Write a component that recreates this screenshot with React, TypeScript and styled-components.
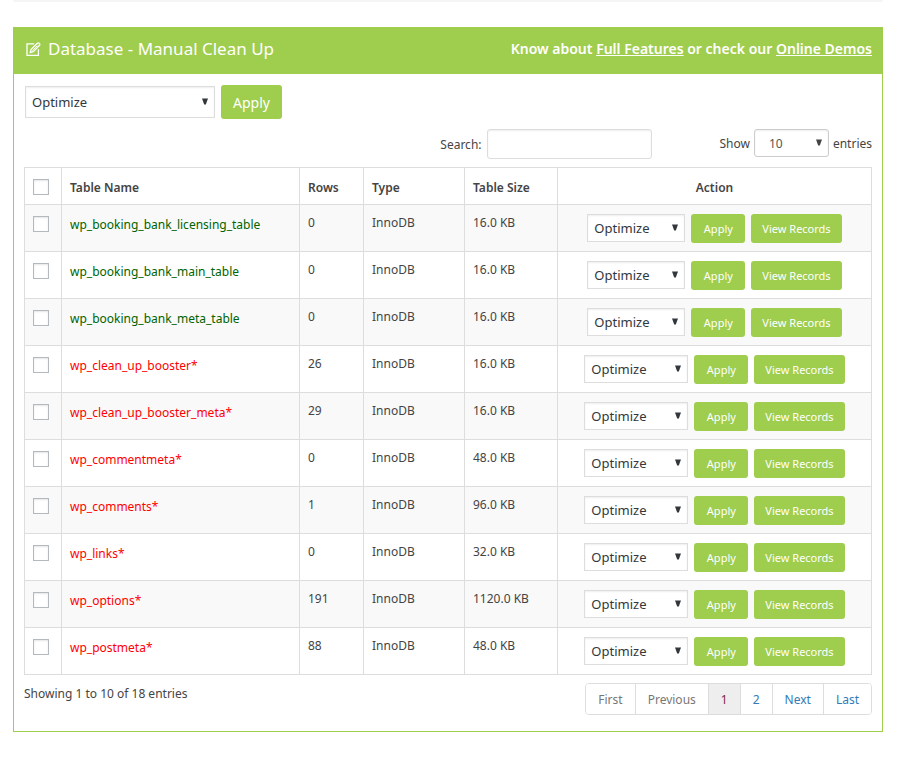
import React from 'react';
import styled, { createGlobalStyle } from 'styled-components';

const GREEN = '#9fcd4e';
const LINE = '#dddddd';

const GlobalStyle = createGlobalStyle`
  *, *::before, *::after { box-sizing: border-box; }
  body {
    margin: 0;
    background: #ffffff;
    color: #444444;
    font-family: 'Noto Sans', 'Open Sans', sans-serif;
    font-size: 12px;
    line-height: 18px;
  }
  button, input, select { font-family: inherit; }
`;

const Page = styled.div`
  padding: 0 14px 24px 13px;
`;

const PreviousPanelEdge = styled.div`
  height: 2px;
  margin-bottom: 25px;
  background: #f5f5f5;
  border-radius: 0 0 4px 4px;
`;

const Panel = styled.section`
  border: 1px solid ${GREEN};
  background: #ffffff;
`;

const PanelHeader = styled.header`
  display: flex;
  align-items: center;
  justify-content: space-between;
  min-height: 46px;
  padding: 0 10px 4px 12px;
  background: ${GREEN};
  color: #ffffff;
`;

const Title = styled.h1`
  display: flex;
  align-items: center;
  gap: 7px;
  margin: 0;
  font-size: 17px;
  font-weight: 400;
  line-height: 24px;
`;

const Promo = styled.p`
  margin: 0;
  font-size: 14px;
  font-weight: 600;
  line-height: 20px;
`;

const PromoLink = styled.a`
  color: #ffffff;
  text-decoration: underline;
`;

const PanelBody = styled.div`
  padding: 11px 10px 16px;
`;

const BulkBar = styled.div`
  display: flex;
  align-items: center;
  gap: 6px;
  padding-left: 1px;
  margin-bottom: 10px;
`;

const SelectBox = styled.span<{ $width: number }>`
  display: inline-grid;
  align-items: center;
  width: ${(p) => p.$width}px;

  > * { grid-area: 1 / 1; }
`;

const SelectField = styled.select<{ $tall?: boolean; $entries?: boolean }>`
  appearance: none;
  width: 100%;
  height: ${(p) => (p.$tall ? 32 : 28)}px;
  margin: 0;
  padding: 0 20px 0 ${(p) => (p.$entries ? 14 : 6)}px;
  border: 1px solid ${(p) => (p.$entries ? '#cccccc' : LINE)};
  border-radius: ${(p) => (p.$entries ? 3 : 0)}px;
  background: #ffffff;
  box-shadow: inset 0 1px 2px rgba(0, 0, 0, 0.07);
  color: ${(p) => (p.$entries ? '#555555' : '#32373c')};
  font-size: ${(p) => (p.$entries ? 12 : 13)}px;
`;

const Arrow = styled.svg`
  justify-self: end;
  margin-right: 7px;
  margin-bottom: 1px;
  pointer-events: none;
`;

const Button = styled.button<{ $large?: boolean }>`
  min-width: 54px;
  height: ${(p) => (p.$large ? 34 : 29)}px;
  padding: 0 ${(p) => (p.$large ? 12 : 11)}px;
  border: 0;
  border-radius: 3px;
  background: ${GREEN};
  color: #ffffff;
  font-size: ${(p) => (p.$large ? 14 : 11)}px;
  white-space: nowrap;
  cursor: pointer;
`;

const Controls = styled.div`
  display: grid;
  grid-template-columns: 74% 1fr;
  align-items: start;
  margin-bottom: 8px;
`;

const SearchLabel = styled.label`
  justify-self: end;
  display: flex;
  align-items: center;
  gap: 5px;
`;

const SearchInput = styled.input`
  width: 165px;
  height: 30px;
  padding: 3px 8px;
  border: 1px solid ${LINE};
  border-radius: 3px;
  background: #ffffff;
  box-shadow: inset 0 1px 2px rgba(0, 0, 0, 0.07);
  font-size: 12px;
`;

const LengthLabel = styled.label`
  justify-self: end;
  display: flex;
  align-items: center;
  gap: 4px;
`;

const Caption = styled.span`
  padding-top: 2px;
`;

const Table = styled.table`
  width: 100%;
  table-layout: fixed;
  border-collapse: collapse;
`;

const HeadCell = styled.th<{ $width?: number; $center?: boolean }>`
  width: ${(p) => (p.$width ? `${p.$width}px` : 'auto')};
  height: 37px;
  padding: 4px 8px 0;
  border: 1px solid ${LINE};
  font-weight: 600;
  text-align: ${(p) => (p.$center ? 'center' : 'left')};
`;

const CheckHeadCell = styled(HeadCell)`
  padding-top: 2px;
`;

const Row = styled.tr`
  height: 47px;

  &:nth-child(odd) { background: #f9f9f9; }
`;

const Cell = styled.td`
  padding: 9px 8px 8px;
  border: 1px solid ${LINE};
  vertical-align: top;
`;

const NameCell = styled(Cell)<{ $core: boolean }>`
  padding-top: 11px;
  color: ${(p) => (p.$core ? '#ff0000' : '#006400')};
`;

const CheckCell = styled(Cell)`
  padding-top: 11px;
`;

const CheckBox = styled.input`
  appearance: none;
  display: block;
  width: 16px;
  height: 16px;
  margin: 0;
  border: 1px solid #b4b9be;
  background: #ffffff;
  box-shadow: inset 0 1px 2px rgba(0, 0, 0, 0.1);

  &:checked { background: ${GREEN}; }
`;

const Actions = styled.div`
  display: flex;
  justify-content: center;
  align-items: flex-start;
  gap: 6px;
`;

const Footer = styled.footer`
  display: flex;
  align-items: flex-start;
  justify-content: space-between;
  padding-top: 8px;
`;

const Pager = styled.nav`
  display: flex;
  border: 1px solid ${LINE};
  border-radius: 4px;
  overflow: hidden;
`;

const PageLink = styled.a<{ $state?: 'disabled' | 'current' }>`
  padding: 7px 12px 5px;
  background: ${(p) => (p.$state === 'current' ? '#eeeeee' : '#ffffff')};
  color: ${(p) =>
    p.$state === 'disabled' ? '#777777' : p.$state === 'current' ? '#7a2b4b' : '#337ab7'};
  text-decoration: none;

  & + & { border-left: 1px solid ${LINE}; }
`;

const TitleIcon = () => (
  <svg width="15" height="15" viewBox="0 0 15 15" fill="none" stroke="#ffffff" strokeWidth="1.3" aria-hidden="true">
    <path d="M8.2 1.9H1v11.4h11.4V7.2" />
    <path d="M4.3 10.5l.8-3.1 6.3-6.2c.5-.5 1.2-.5 1.7 0l.4.4c.5.5.5 1.2 0 1.7L7.3 9.6z" />
    <path d="M6.2 8.7l5-5" strokeWidth="1" />
  </svg>
);

type SelectProps = {
  label: string;
  width: number;
  options: string[];
  tall?: boolean;
  entries?: boolean;
};

const Select = ({ label, width, options, tall, entries }: SelectProps) => (
  <SelectBox $width={width}>
    <SelectField aria-label={label} $tall={tall} $entries={entries}>
      {options.map((o) => (
        <option key={o}>{o}</option>
      ))}
    </SelectField>
    <Arrow width="6" height="7" viewBox="0 0 6 7" aria-hidden="true">
      <path d="M0 0.5h6L3.8 6.5H2.2z" fill={entries ? '#444444' : '#32373c'} />
    </Arrow>
  </SelectBox>
);

const coreActions = ['Optimize', 'Repair'];
const otherActions = ['Optimize', 'Repair', 'Empty', 'Delete'];

const tables = [
  { name: 'wp_booking_bank_licensing_table', rows: 0, size: '16.0 KB', core: false },
  { name: 'wp_booking_bank_main_table', rows: 0, size: '16.0 KB', core: false },
  { name: 'wp_booking_bank_meta_table', rows: 0, size: '16.0 KB', core: false },
  { name: 'wp_clean_up_booster', rows: 26, size: '16.0 KB', core: true },
  { name: 'wp_clean_up_booster_meta', rows: 29, size: '16.0 KB', core: true },
  { name: 'wp_commentmeta', rows: 0, size: '48.0 KB', core: true },
  { name: 'wp_comments', rows: 1, size: '96.0 KB', core: true },
  { name: 'wp_links', rows: 0, size: '32.0 KB', core: true },
  { name: 'wp_options', rows: 191, size: '1120.0 KB', core: true },
  { name: 'wp_postmeta', rows: 88, size: '48.0 KB', core: true },
];

export default function App() {
  return (
    <>
      <GlobalStyle />
      <Page>
        <PreviousPanelEdge />
        <Panel>
          <PanelHeader>
            <Title>
              <TitleIcon />
              Database - Manual Clean Up
            </Title>
            <Promo>
              Know about <PromoLink href="#features">Full Features</PromoLink> or check our{' '}
              <PromoLink href="#demos">Online Demos</PromoLink>
            </Promo>
          </PanelHeader>
          <PanelBody>
            <BulkBar>
              <Select label="Bulk action" width={190} options={otherActions} tall />
              <Button type="button" $large>Apply</Button>
            </BulkBar>
            <Controls>
              <SearchLabel>
                <Caption>Search:</Caption>
                <SearchInput type="search" />
              </SearchLabel>
              <LengthLabel>
                <Caption>Show</Caption>
                <Select label="Entries per page" width={75} options={['10', '25', '50', '100']} entries />
                <Caption>entries</Caption>
              </LengthLabel>
            </Controls>
            <Table>
              <thead>
                <tr>
                  <CheckHeadCell $width={37}>
                    <CheckBox type="checkbox" aria-label="Select all tables" />
                  </CheckHeadCell>
                  <HeadCell>Table Name</HeadCell>
                  <HeadCell $width={64}>Rows</HeadCell>
                  <HeadCell $width={101}>Type</HeadCell>
                  <HeadCell $width={93}>Table Size</HeadCell>
                  <HeadCell $width={314} $center>Action</HeadCell>
                </tr>
              </thead>
              <tbody>
                {tables.map((t) => (
                  <Row key={t.name}>
                    <CheckCell>
                      <CheckBox type="checkbox" aria-label={`Select ${t.name}`} />
                    </CheckCell>
                    <NameCell $core={t.core}>{t.core ? `${t.name}*` : t.name}</NameCell>
                    <Cell>{t.rows}</Cell>
                    <Cell>InnoDB</Cell>
                    <Cell>{t.size}</Cell>
                    <Cell>
                      <Actions>
                        <Select
                          label={`Action for ${t.name}`}
                          width={t.core ? 104 : 98}
                          options={t.core ? coreActions : otherActions}
                        />
                        <Button type="button">Apply</Button>
                        <Button type="button">View Records</Button>
                      </Actions>
                    </Cell>
                  </Row>
                ))}
              </tbody>
            </Table>
            <Footer>
              <Caption>Showing 1 to 10 of 18 entries</Caption>
              <Pager aria-label="Table pages">
                <PageLink href="#first" $state="disabled">First</PageLink>
                <PageLink href="#previous" $state="disabled">Previous</PageLink>
                <PageLink href="#1" $state="current" aria-current="page">1</PageLink>
                <PageLink href="#2">2</PageLink>
                <PageLink href="#next">Next</PageLink>
                <PageLink href="#last">Last</PageLink>
              </Pager>
            </Footer>
          </PanelBody>
        </Panel>
      </Page>
    </>
  );
}
